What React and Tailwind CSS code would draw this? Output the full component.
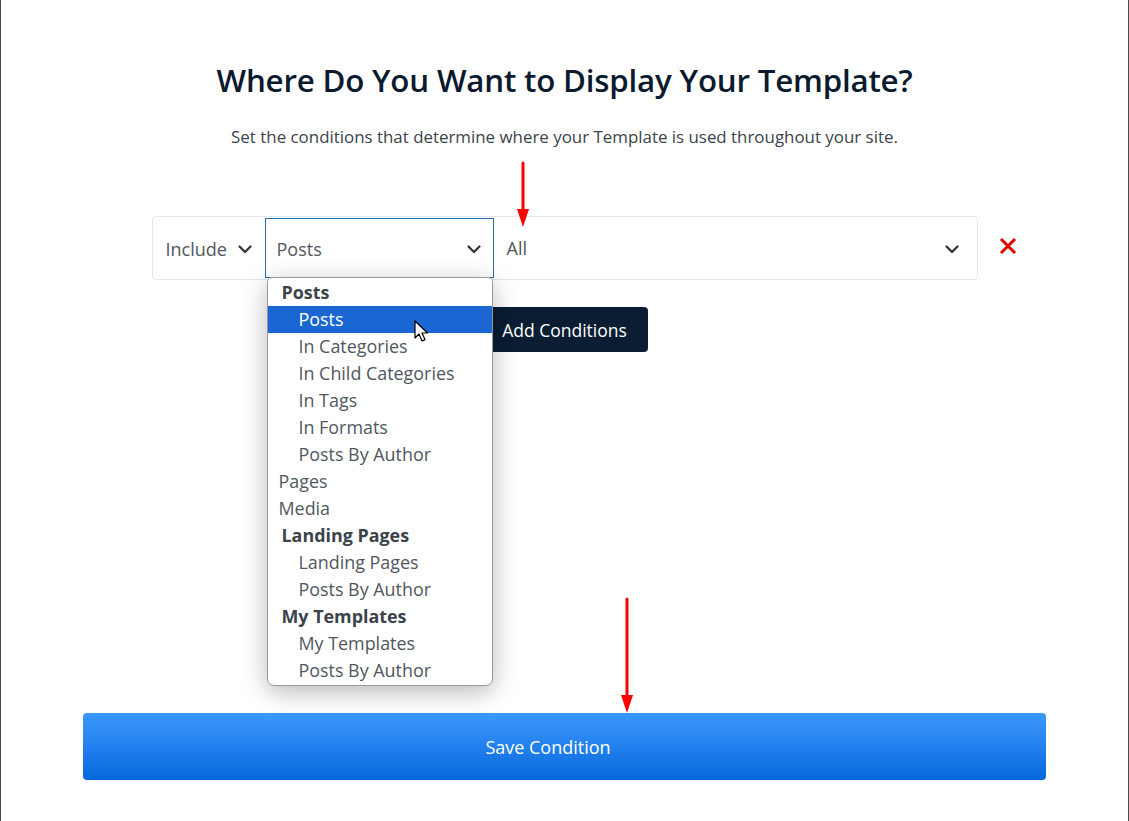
import React from "react";

const font = { fontFamily: '"Open Sans", "Noto Sans", sans-serif' };

const options = [
  { label: "Posts", kind: "group" },
  { label: "Posts", kind: "sub", active: true },
  { label: "In Categories", kind: "sub" },
  { label: "In Child Categories", kind: "sub" },
  { label: "In Tags", kind: "sub" },
  { label: "In Formats", kind: "sub" },
  { label: "Posts By Author", kind: "sub" },
  { label: "Pages", kind: "top" },
  { label: "Media", kind: "top" },
  { label: "Landing Pages", kind: "group" },
  { label: "Landing Pages", kind: "sub" },
  { label: "Posts By Author", kind: "sub" },
  { label: "My Templates", kind: "group" },
  { label: "My Templates", kind: "sub" },
  { label: "Posts By Author", kind: "sub" },
];

function Chevron({ className = "" }) {
  return (
    <svg viewBox="0 0 16 16" className={`h-4 w-4 ${className}`} fill="none">
      <path d="M2.5 5.5 8 11l5.5-5.5" stroke="#2c3338" strokeWidth="2.2" strokeLinecap="round" strokeLinejoin="round" />
    </svg>
  );
}

function RedArrow({ length }) {
  return (
    <svg width="14" height={length} viewBox={`0 0 14 ${length}`}>
      <line x1="7" y1="2" x2="7" y2={length - 14} stroke="#ff0000" strokeWidth="3" strokeLinecap="round" />
      <path d={`M1 ${length - 18} L13 ${length - 18} L7 ${length} Z`} fill="#ff0000" />
    </svg>
  );
}

function Cursor() {
  return (
    <svg width="18" height="24" viewBox="0 0 18 24">
      <path d="M1 1 L1 18 L5 14 L8 21 L11 19.6 L8 13 L13.5 13 Z" fill="#fff" stroke="#000" strokeWidth="1.2" strokeLinejoin="round" />
    </svg>
  );
}

export default function App() {
  return (
    <div className="relative h-[821px] overflow-hidden border-x border-[#4a4a4a] bg-white" style={font}>
      <div className="flex flex-col items-center">
        <h1 className="mt-[60px] text-[31.3px] font-semibold leading-[40px] tracking-[-0.2px] text-[#0b1a2e]">
          Where Do You Want to Display Your Template?
        </h1>
        <p className="mt-[25px] text-[16.9px] leading-[24px] text-[#3c434a]">
          Set the conditions that determine where your Template is used throughout your site.
        </p>

        {/* condition row */}
        <div className="relative mt-[67px] flex h-[64px] w-[826px] items-center rounded border border-[#e3e6ec] bg-white">
          <div className="flex h-full w-[112px] items-center justify-between pl-[13px] pr-[12px] pt-[2px] text-[18px] text-[#50575e]">
            <span>Include</span>
            <Chevron />
          </div>
          <div className="flex h-[60px] w-[229px] items-center justify-between border border-[#2271b1] pl-[11px] pr-[11px] pt-[2px] text-[18px] text-[#50575e]">
            <span>Posts</span>
            <Chevron />
          </div>
          <div className="flex h-full flex-1 items-center justify-between pl-[13px] pr-[17px] pt-[1px] text-[18px] text-[#50575e]">
            <span>All</span>
            <Chevron />
          </div>

          <button className="absolute left-full top-[20px] ml-[22px]">
            <svg width="18" height="18" viewBox="0 0 18 18">
              <path d="M2 2 L16 16 M16 2 L2 16" stroke="#e00000" strokeWidth="3" />
            </svg>
          </button>

          <div className="absolute left-[363px] top-[-56px]">
            <RedArrow length={66} />
          </div>

          {/* open dropdown */}
          <div className="absolute left-[114px] top-[60px] z-20 w-[226px] overflow-hidden rounded-b-[7px] rounded-t-[5px] border border-[#9a9a9a] bg-white py-px shadow-[0_6px_24px_rgba(0,0,0,0.28)]">
            {options.map((o, i) => (
              <div
                key={i}
                className={`flex h-[27px] items-center whitespace-nowrap text-[17.9px] ${
                  o.kind === "group"
                    ? "pl-[14px] font-bold text-[#3c434a]"
                    : o.kind === "sub"
                    ? "pl-[31px] text-[#50575e]"
                    : "pl-[11px] text-[#50575e]"
                } ${o.active ? "bg-[#1a67d3] text-white" : ""}`}
              >
                {o.label}
              </div>
            ))}
          </div>
          <div className="absolute left-[261px] top-[103px] z-30">
            <Cursor />
          </div>
        </div>

        <button className="mt-[27px] h-[45px] w-[166px] rounded bg-[#0b1d33] pt-[1px] text-[17.5px] text-white">
          Add Conditions
        </button>

        <div className="relative mt-[361px] w-[963px]">
          <div className="absolute left-[537px] top-[-116px]">
            <RedArrow length={116} />
          </div>
          <button className="h-[67px] w-full rounded bg-gradient-to-b from-[#3a99fd] to-[#0268dc] pr-[33px] pt-[1px] text-[18px] text-white">
            Save Condition
          </button>
        </div>
      </div>
    </div>
  );
}
